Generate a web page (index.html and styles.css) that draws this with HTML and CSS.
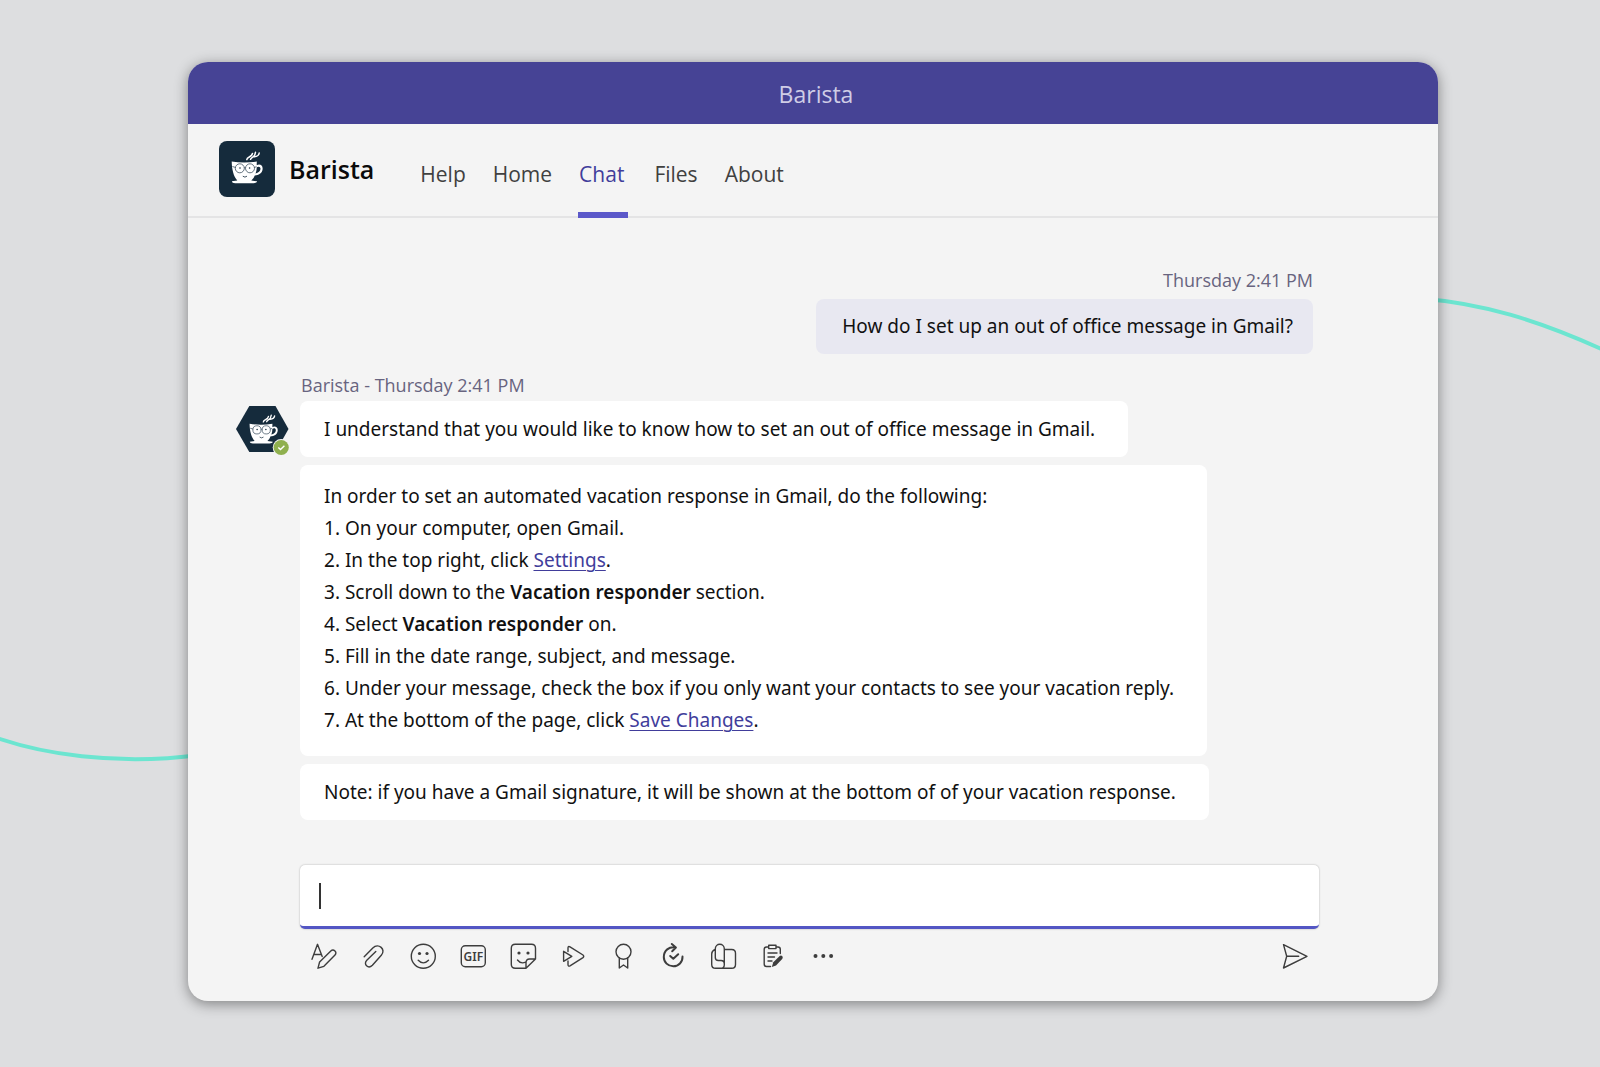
FILE: index.html
```html
<!DOCTYPE html>
<html lang="en">
<head>
<meta charset="utf-8">
<title>Barista</title>
<link rel="stylesheet" href="styles.css">
</head>
<body>
<svg class="backdrop" viewBox="0 0 1600 1067" preserveAspectRatio="none" aria-hidden="true">
  <path d="M-10 735.500C40 754 115 766 200 755"/>
  <path d="M1420 298.500C1480 303 1537 319 1610 353"/>
</svg>
<svg class="defs" aria-hidden="true">
  <symbol id="cup" viewBox="0 0 56 56">
    <path fill="#fff" d="M12.700 20.600Q25 22.500 37.800 20.600L37.700 24.200C41 22.500 44 24.500 43.600 28.200C43.200 32.300 39.500 34.200 35.800 34.400Q34.600 37.700 32.300 39.600L38.200 40.300Q38 42.200 34.500 42.200H16.200Q13 42.200 12.900 40.300L18.300 39.600C14.600 35.500 12.900 29 12.700 20.600ZM37.700 26.300C37.700 28.800 37.200 31 36.500 32.400C39.500 32 41.300 30.300 41.500 28.100C41.700 25.700 39.600 25 37.700 26.300Z"/>
    <path fill="none" stroke="#fff" stroke-width="1.500" stroke-linecap="round" d="M27.800 18.600C28 15.500 32.800 16.500 33.500 12.500M31.500 18.300C33 15.300 36 16.500 36.500 11.200M35.200 15.800C38 15.500 40 14 40.200 12"/>
    <g fill="none" stroke="#3d5060" stroke-width=".8"><circle cx="20.800" cy="27.300" r="4.500"/><circle cx="31" cy="27.300" r="4.500"/><path d="M25.100 27Q25.900 26.300 26.700 27M13.400 25.500L16.700 26.500M35.200 26.500L37.500 25.700"/><path stroke="#152b3c" d="M23.800 35.200Q25.900 37 28 35.200"/></g>
    <circle cx="21" cy="27" r=".8" fill="#152b3c"/><circle cx="30.600" cy="27" r=".8" fill="#152b3c"/>
  </symbol>
</svg>

<main class="window">
  <header class="titlebar">Barista</header>
  <div class="appbar">
    <svg class="logo" viewBox="0 0 56 56" aria-hidden="true"><rect width="56" height="56" rx="8" fill="#152b3c"/><use href="#cup" width="56" height="56"/></svg>
    <h1 class="app-name">Barista</h1>
    <nav class="tabs">
      <a href="#help">Help</a>
      <a href="#home">Home</a>
      <a class="active" href="#chat" aria-current="page">Chat</a>
      <a href="#files">Files</a>
      <a href="#about">About</a>
    </nav>
  </div>

  <section class="chat">
    <div class="sent">
      <time class="stamp">Thursday 2:41 PM</time>
      <p class="bubble own">How do I set up an out of office message in Gmail?</p>
    </div>
    <div class="received">
      <div class="avatar">
        <svg viewBox="0 0 54 50" aria-hidden="true">
          <path fill="#152b3c" d="M0 23L13.300 0H39.500L52.500 23L39.500 46H13.300Z"/>
          <use href="#cup" x="2" y="-1" width="51" height="51"/>
          <circle cx="45.200" cy="41.500" r="8.500" fill="#f4f4f4"/>
          <circle cx="45.200" cy="41.500" r="7.600" fill="#8fb04e"/>
          <path fill="none" stroke="#fff" stroke-width="1.400" d="M42.300 41.500L44.500 43.600L48.400 39.700"/>
        </svg>
      </div>
      <div class="thread">
        <div class="stamp">Barista - Thursday 2:41 PM</div>
        <p class="bubble">I understand that you would like to know how to set an out of office message in Gmail.</p>
        <div class="bubble steps">
          <p>In order to set an automated vacation response in Gmail, do the following:</p>
          <ol>
            <li>On your computer, open Gmail.</li>
            <li>In the top right, click <a href="#settings">Settings</a>.</li>
            <li>Scroll down to the <b>Vacation responder</b> section.</li>
            <li>Select <b>Vacation responder</b> on.</li>
            <li>Fill in the date range, subject, and message.</li>
            <li>Under your message, check the box if you only want your contacts to see your vacation reply.</li>
            <li>At the bottom of the page, click <a href="#save">Save Changes</a>.</li>
          </ol>
        </div>
        <p class="bubble">Note: if you have a Gmail signature, it will be shown at the bottom of of your vacation response.</p>
      </div>
    </div>
  </section>

  <form class="composer">
    <div class="field">
      <span class="caret"></span>
      <input type="text" aria-label="Type a message">
    </div>
    <div class="tools">
      <button type="button" aria-label="Format"><svg viewBox="0 0 28 28"><path d="M3 17.300L8.500 2.300L13.200 14.600M5 12.500H11.500M9 26.200L10.600 20L21.800 8.900C24.600 6.300 28.700 10.200 26 13L14.900 24.300Z"/></svg></button>
      <button type="button" aria-label="Attach"><svg viewBox="0 0 28 28"><path d="M5.200 14.800L13.800 6C19.500 .500 27.500 7.500 22.300 13.200L13.400 23.300C9.200 27.400 3.900 22.300 7.800 18.200L16.800 9.400"/></svg></button>
      <button type="button" aria-label="Emoji"><svg viewBox="0 0 28 28"><circle cx="14.300" cy="14.300" r="12"/><path d="M9.200 18.200Q14.300 23.500 19.500 18.200"/><g class="solid"><circle cx="10.500" cy="11.500" r="1.600"/><circle cx="18" cy="11.500" r="1.600"/></g></svg></button>
      <button type="button" aria-label="GIF"><svg viewBox="0 0 28 28"><rect x="2.300" y="3.700" width="24" height="21" rx="4"/><text x="14.300" y="18.600" text-anchor="middle">GIF</text></svg></button>
      <button type="button" aria-label="Sticker"><svg viewBox="0 0 28 28"><path d="M17 26.300H6.300Q2.300 26.300 2.300 22.300V6.300Q2.300 2.300 6.300 2.300H22.500Q26.500 2.300 26.500 6.300V17L17 26.300V21Q17 17 20.500 17H26.500M8.500 18Q12 22.500 16.800 20"/><g class="solid"><circle cx="10" cy="11" r="1.600"/><circle cx="19" cy="11" r="1.600"/></g></svg></button>
      <button type="button" aria-label="Stream"><svg viewBox="0 0 28 28"><path d="M9 9.600V6Q9 3.800 11 4.800L24 13Q25.500 14.300 24 15.600L11 23.800Q9 24.800 9 22.600V19M4.600 9.300V19.300L12.800 14.300Z"/></svg></button>
      <button type="button" aria-label="Praise"><svg viewBox="0 0 28 28"><circle cx="14.500" cy="9.700" r="7.500"/><path d="M10.300 16V26L14.500 23L18.700 26V16"/></svg></button>
      <button type="button" aria-label="Loop"><svg viewBox="0 0 28 28"><g class="heavy"><path d="M16.500 5.400C10 4.200 4.800 8.700 4.800 14.900C4.800 20.300 9 24.300 14.300 24.300C19.600 24.300 23.700 20 23.500 14.600M12.800 2L16.900 5.500L13.200 9.200M11.200 14L14.300 16.800L19.200 12.200"/></g></svg></button>
      <button type="button" aria-label="Copy"><svg viewBox="0 0 28 28"><path d="M6.300 15.500V6.800C6.300 .8 15.300 .8 15.300 6.800V22.800Q15.300 26.300 12 26.300H6.500Q2.700 26.300 2.700 22.500V12Q2.700 9 6 7.500M6.300 15.500Q6.300 18.500 9.300 18.500H12Q15.300 18.500 15.300 22M15.300 7.500H22.700Q26.500 7.500 26.500 11.300V22.500Q26.500 26.300 22.700 26.300H12"/></svg></button>
      <button type="button" aria-label="Tasks"><svg viewBox="0 0 28 28"><path d="M9.500 5H7.500Q5.200 5 5.200 7.300V22Q5.200 24.500 7.500 24.500H11.500M17.500 5H19Q21.300 5 21.300 7.300V11.500M9.700 3.300H17V6.600H9.700ZM9 11H18M9 15H15.500M9 19H13"/><path class="solid" d="M12.800 25L14.300 20.300L20.700 14Q22.300 13 23.400 14.500Q24.200 15.700 23.200 16.900L17 23.400Z"/></svg></button>
      <button type="button" aria-label="More"><svg viewBox="0 0 28 28"><g class="solid"><circle cx="6.500" cy="14" r="2"/><circle cx="14.300" cy="14" r="2"/><circle cx="22.100" cy="14" r="2"/></g></svg></button>
      <button class="send" type="submit" aria-label="Send"><svg viewBox="0 0 28 28"><path d="M3.500 2.600L27 14.300L3.500 26L6.700 14.300ZM6.700 14.300H18.700"/></svg></button>
    </div>
  </form>
</main>
</body>
</html>
```

FILE: styles.css
```css
* { box-sizing: border-box; }

body {
  margin: 0;
  padding: 62px 162px 66px 188px;
  background: #dddee0;
  color: #111;
  font: 19px/32px "Noto Sans", "Open Sans", sans-serif;
}

p, h1, ol { margin: 0; padding: 0; }

.defs { position: absolute; width: 0; height: 0; }

.backdrop {
  position: absolute;
  inset: 0;
  width: 100%;
  height: 100%;
  fill: none;
  stroke: #6ce5d0;
  stroke-width: 4;
}

.window {
  position: relative;
  overflow: hidden;
  border-radius: 20px;
  background: #f4f4f4;
  box-shadow: 0 3px 14px rgba(0, 0, 0, .42);
}

.titlebar {
  padding: 16px 0 14px 6px;
  background: #464395;
  color: #cfcde6;
  font-family: "Open Sans", sans-serif;
  font-size: 23px;
  text-align: center;
}

.appbar {
  display: flex;
  align-items: stretch;
  height: 94px;
  padding-left: 31px;
  border-bottom: 2px solid #e4e4e5;
}

.logo { width: 56px; height: 56px; margin-top: 17px; }

.app-name {
  margin: 29px 45px 0 14px;
  color: #0a0a0a;
  font-family: "Open Sans", sans-serif;
  font-size: 25px;
  line-height: 32px;
  font-weight: 600;
}

.tabs { display: flex; gap: 25px; margin-bottom: -2px; }

.tabs a {
  padding: 34px 1px 0;
  color: #404040;
  font-family: "Open Sans", sans-serif;
  font-size: 21px;
  text-decoration: none;
}

.tabs .active {
  padding-right: 4px;
  border-bottom: 6px solid #5b58c9;
  color: #413d9b;
}

.chat { padding: 46px 125px 0 48px; }

.stamp {
  color: #68647f;
  font-family: "Open Sans", sans-serif;
  font-size: 18px;
}

.sent { display: flex; flex-direction: column; align-items: flex-end; gap: 3px; }

.bubble {
  padding: 12px 33px 12px 24px;
  border-radius: 8px;
  background: #fff;
}

.own { padding: 11px 20px 12px 26px; background: #e8e8f1; }

.received { display: flex; gap: 10px; margin-top: 15px; }

.avatar { width: 54px; padding-top: 37px; }
.avatar svg { display: block; width: 54px; height: 50px; }

.thread { display: flex; flex-direction: column; align-items: flex-start; gap: 8px; }
.thread .stamp { margin-bottom: -8px; padding: 0 1px; }

.steps { padding-top: 15px; padding-bottom: 20px; }
.steps ol { list-style: none; counter-reset: step; }
.steps li { counter-increment: step; }
.steps li::before { content: counter(step) ". "; }
.steps a { color: #413d9b; text-decoration-thickness: 1px; text-underline-offset: 3px; }
.steps b { font-weight: 600; }

.composer { padding: 45px 119px 31px 112px; }

.field {
  display: flex;
  align-items: center;
  height: 64px;
  padding: 0 19px;
  border-bottom: 3px solid #5356c4;
  border-radius: 5px;
  background: #fff;
  box-shadow: 0 0 2px rgba(0, 0, 0, .3);
}

.caret { width: 2px; height: 26px; background: #333; }

.field input {
  flex: 1;
  border: 0;
  outline: 0;
  background: transparent;
  font: inherit;
}

.tools { display: flex; gap: 22px; padding: 13px 11px 0 9px; }

.tools button {
  width: 28px;
  height: 28px;
  padding: 0;
  border: 0;
  background: none;
  font: inherit;
}

.tools .send { margin-left: auto; }

.tools svg {
  display: block;
  width: 28px;
  height: 28px;
  fill: none;
  stroke: #3d3d3d;
  stroke-width: 1.4;
  stroke-linejoin: round;
  stroke-linecap: round;
}

.tools .solid { fill: #3d3d3d; stroke: none; }
.tools .heavy { stroke-width: 2; }
.tools text { fill: #3d3d3d; stroke: none; font-size: 12px; font-weight: 600; }
```
